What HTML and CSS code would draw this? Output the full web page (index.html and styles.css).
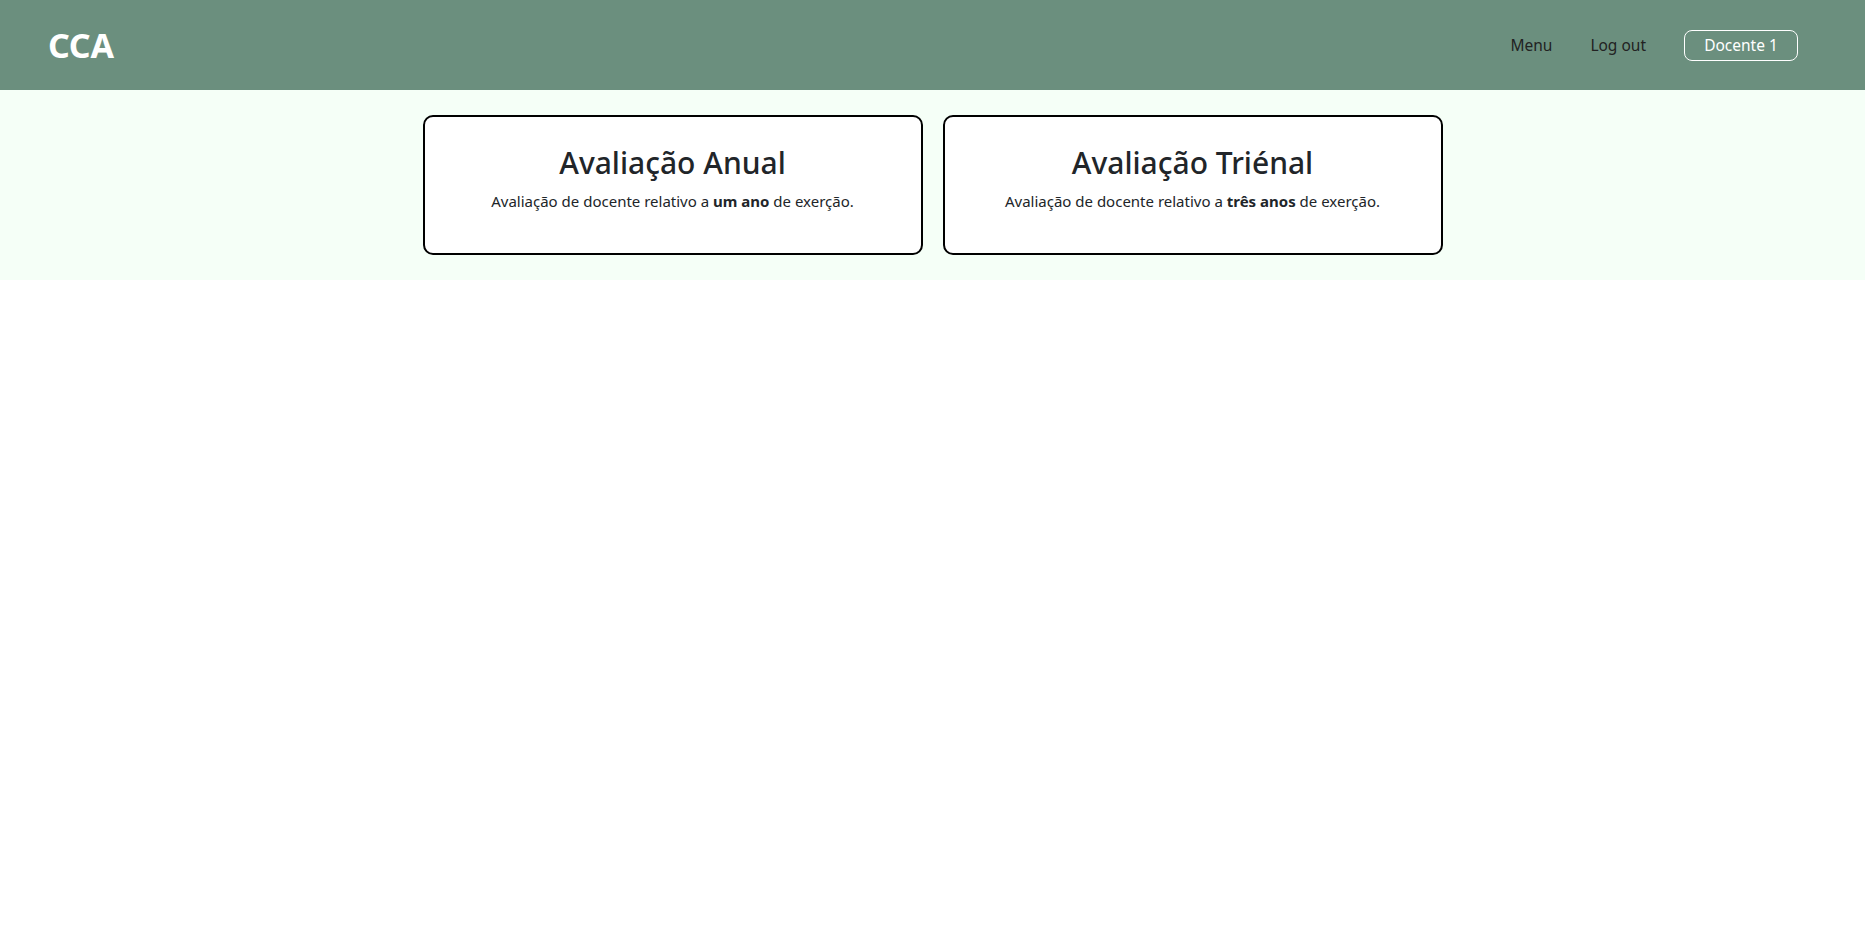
FILE: index.html
```html
<!DOCTYPE html>
<html lang="pt">
<head>
<meta charset="utf-8">
<title>CCA</title>
<link rel="stylesheet" href="styles.css">
</head>
<body>
<header class="topbar">
  <div class="brand">CCA</div>
  <nav class="nav">
    <a class="nav-link" href="#">Menu</a>
    <a class="nav-link" href="#">Log out</a>
    <a class="nav-btn" href="#">Docente 1</a>
  </nav>
</header>
<main class="band">
  <div class="cards">
    <a class="card" href="#">
      <h2 class="card-title">Avaliação Anual</h2>
      <p class="card-text">Avaliação de docente relativo a <b>um ano</b> de exerção.</p>
    </a>
    <a class="card" href="#">
      <h2 class="card-title">Avaliação Triénal</h2>
      <p class="card-text">Avaliação de docente relativo a <b>três anos</b> de exerção.</p>
    </a>
  </div>
</main>
</body>
</html>
```
FILE: styles.css
```css
* { box-sizing: border-box; }
body {
  margin: 0;
  font-family: "Noto Sans", "Open Sans", sans-serif;
  color: #212529;
  background: #fff;
}
.topbar {
  height: 90px;
  background: #6b8f7e;
  display: flex;
  align-items: center;
  justify-content: space-between;
  padding: 0 67px 0 48px;
}
.brand {
  color: #fff;
  font-weight: 700;
  font-size: 34px;
  letter-spacing: -0.3px;
}
.nav {
  display: flex;
  align-items: center;
}
.nav-link {
  color: #222;
  text-decoration: none;
  font-size: 15.5px;
  margin-right: 38px;
}
.nav-link + .nav-link { margin-right: 38px; }
.nav-btn {
  color: #fff;
  text-decoration: none;
  font-size: 15.5px;
  border: 1px solid #fff;
  border-radius: 8px;
  width: 114px;
  height: 31px;
  display: flex;
  align-items: center;
  justify-content: center;
}
.band {
  background: #f5fff7;
  height: 190px;
  padding-top: 25px;
}
.cards {
  display: flex;
  justify-content: center;
  gap: 20px;
}
.card {
  width: 500px;
  height: 140px;
  background: #fff;
  border: 2px solid #000;
  border-radius: 10px;
  text-decoration: none;
  color: #212529;
  text-align: center;
  padding-top: 28px;
}
.card-title {
  margin: 0;
  font-size: 30px;
  font-weight: 500;
  line-height: 1.2;
}
.card-text {
  margin: 10px 0 0;
  font-size: 15px;
}
.card-text b { font-weight: 700; }
```
